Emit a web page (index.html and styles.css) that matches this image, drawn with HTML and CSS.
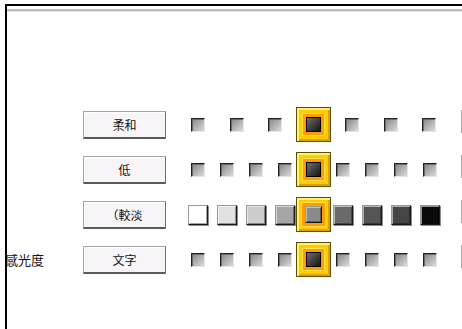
FILE: index.html
```html
<!DOCTYPE html>
<html lang="zh-Hant">

<head>
    <meta charset="UTF-8">
    <meta name="viewport" content="width=device-width, initial-scale=1.0">
    <title>影像調整</title>
    <link rel="stylesheet" href="styles.css">
</head>

<body>
    <div class="frame">
        <div class="rule"></div>
        <div class="rows">
            <!-- 柔和 -->
            <div class="row">
                <span class="label"></span>
                <button class="key" type="button">柔和</button>
                <div class="scale scale-7">
                    <span class="dot"></span>
                    <span class="dot"></span>
                    <span class="dot"></span>
                    <span class="sel"><span class="ring"><span class="core"></span></span></span>
                    <span class="dot"></span>
                    <span class="dot"></span>
                    <span class="dot"></span>
                </div>
                <span class="edge"></span>
            </div>

            <!-- 低 -->
            <div class="row">
                <span class="label"></span>
                <button class="key" type="button">低</button>
                <div class="scale scale-9">
                    <span class="dot"></span>
                    <span class="dot"></span>
                    <span class="dot"></span>
                    <span class="dot"></span>
                    <span class="sel"><span class="ring"><span class="core"></span></span></span>
                    <span class="dot"></span>
                    <span class="dot"></span>
                    <span class="dot"></span>
                    <span class="dot"></span>
                </div>
                <span class="edge"></span>
            </div>

            <!-- 較淡 -->
            <div class="row">
                <span class="label"></span>
                <button class="key" type="button">（較淡</button>
                <div class="scale scale-9">
                    <span class="tone tone-0"></span>
                    <span class="tone tone-1"></span>
                    <span class="tone tone-2"></span>
                    <span class="tone tone-3"></span>
                    <span class="sel"><span class="ring"><span class="tone tone-4"></span></span></span>
                    <span class="tone tone-5"></span>
                    <span class="tone tone-6"></span>
                    <span class="tone tone-7"></span>
                    <span class="tone tone-8"></span>
                </div>
                <span class="edge"></span>
            </div>

            <!-- 文字 -->
            <div class="row">
                <span class="label">感光度</span>
                <button class="key" type="button">文字</button>
                <div class="scale scale-9">
                    <span class="dot"></span>
                    <span class="dot"></span>
                    <span class="dot"></span>
                    <span class="dot"></span>
                    <span class="sel"><span class="ring"><span class="core"></span></span></span>
                    <span class="dot"></span>
                    <span class="dot"></span>
                    <span class="dot"></span>
                    <span class="dot"></span>
                </div>
                <span class="edge"></span>
            </div>
        </div>
    </div>
</body>

</html>
```

FILE: styles.css
```css
body {
    margin: 0;
    padding: 0;
    background-color: #fff;
    font-family: "Noto Sans CJK TC", "Noto Sans CJK SC", sans-serif;
    color: #111;
}

.frame {
    margin: 4px 0 0 5px;
    height: calc(100vh - 4px);
    box-sizing: border-box;
    border-top: 2px solid #000;
    border-left: 2px solid #000;
    overflow: hidden;
}

.rule {
    margin-top: 3px;
    height: 2px;
    background-color: #bdbdbd;
    border-bottom: 1px solid #e2e2e2;
}

.rows {
    padding-top: 90px;
}

.row {
    display: flex;
    align-items: center;
    height: 45px;
}

.label {
    width: 78px;
    margin-left: -2px;
    flex-shrink: 0;
    font-size: 13px;
    line-height: 16px;
    white-space: nowrap;
}

.key {
    width: 83px;
    height: 28px;
    padding: 0;
    flex-shrink: 0;
    box-sizing: border-box;
    font-family: inherit;
    font-size: 12px;
    color: #111;
    background-color: #f8f5f8;
    border: 1px solid #a4a4a4;
    border-right-color: #6c6c6c;
    border-bottom: 2px solid #5a5a5a;
    border-radius: 1px;
    box-shadow: inset 1px 1px #fff;
}

.scale {
    display: grid;
    align-items: center;
    justify-items: center;
}

.scale-7 {
    margin-left: 13px;
    grid-template-columns: repeat(7, 38.5px);
}

.scale-9 {
    margin-left: 17px;
    grid-template-columns: repeat(9, 29px);
}

/* small inset step */
.dot {
    width: 14px;
    height: 14px;
    box-sizing: border-box;
    border: 1px solid;
    border-color: #222 #e4e4e4 #e4e4e4 #222;
    box-shadow: inset 1px 1px #6a6a6a;
    background: linear-gradient(135deg, #858585, #dadada);
}

/* current position */
.sel {
    display: flex;
    align-items: center;
    justify-content: center;
    width: 35px;
    height: 35px;
    box-sizing: border-box;
    border: 1px solid #5e4e00;
    background-color: #ffcc00;
    box-shadow: inset 2px 2px #fff176, inset -2px -2px #e0a000;
}

.ring {
    display: flex;
    padding: 3px;
    background-color: #ff9c00;
    box-shadow: 0 0 0 1px #ffe24a;
}

.core {
    width: 15px;
    height: 15px;
    box-sizing: border-box;
    border: 1px solid #000;
    background: linear-gradient(135deg, #6e6e6e, #141414);
}

/* density steps */
.tone {
    width: 20px;
    height: 20px;
    box-sizing: border-box;
    border: 1px solid;
    border-color: #9a9a9a #1a1a1a #1a1a1a #9a9a9a;
    box-shadow: inset 1px 1px rgba(255, 255, 255, 0.55), inset -1px -1px rgba(0, 0, 0, 0.35), 1px 1px #8c8c8c;
}

.ring .tone {
    width: 17px;
    height: 17px;
    box-shadow: inset 1px 1px rgba(255, 255, 255, 0.45), inset -1px -1px rgba(0, 0, 0, 0.35);
}

.tone-0 { background-color: #ffffff; }
.tone-1 { background-color: #e2e2e2; }
.tone-2 { background-color: #cdcdcd; }
.tone-3 { background-color: #a5a5a5; }
.tone-4 { background-color: #8a8a8a; }
.tone-5 { background-color: #6a6a6a; }
.tone-6 { background-color: #555555; }
.tone-7 { background-color: #454545; }
.tone-8 { background-color: #0a0a0a; }

.edge {
    margin-left: auto;
    margin-bottom: 6px;
    width: 1px;
    height: 23px;
    flex-shrink: 0;
    background-color: #a8a8a8;
}
```
